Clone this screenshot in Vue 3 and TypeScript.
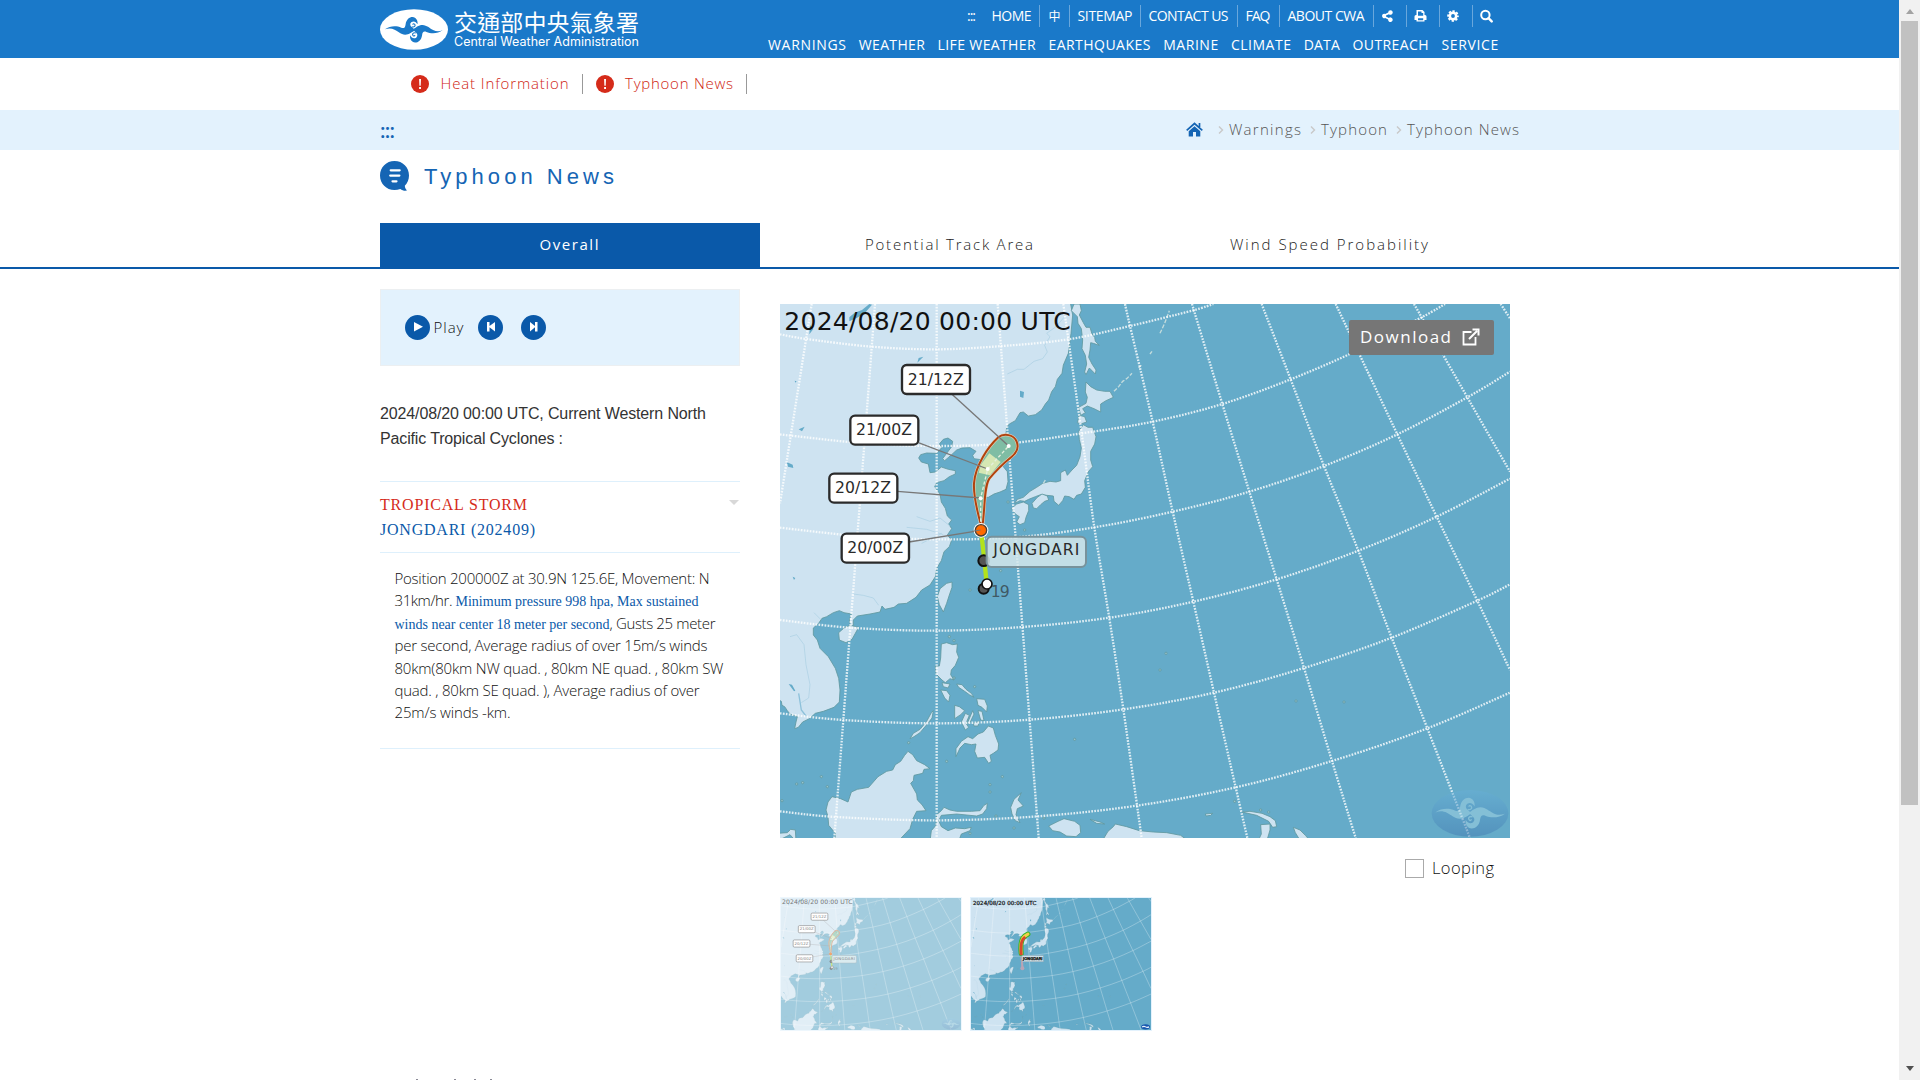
<script setup lang="ts">
import type { Directive } from 'vue'

type Pt = [number, number]

// Tracks a label out (or in) so that its glyphs span the given width in px.
const vFit: Directive<HTMLElement, number> = {
  mounted(el, { value }) {
    const count = (el.textContent ?? '').length
    if (count < 2) return
    el.style.letterSpacing = '0px'
    const spacing = (value - el.getBoundingClientRect().width) / (count - 1)
    el.style.letterSpacing = `${spacing}px`
    el.style.marginRight = `${-spacing}px`
  },
}

const utility = [
  { label: 'HOME', box: 56, fit: 40 },
  { label: '中', box: 30, fit: 12 },
  { label: 'SITEMAP', box: 71, fit: 55 },
  { label: 'CONTACT US', box: 97, fit: 80 },
  { label: 'FAQ', box: 42, fit: 25 },
  { label: 'ABOUT CWA', box: 94, fit: 77 },
]

const tools = [
  'M9.5 1.2a2.3 2.3 0 1 1-1.6 4L5 6.5v1l2.9 1.4a2.3 2.3 0 1 1-.8 1.6L4.300 9.100a2.300 2.300 0 1 1 0-4.200l2.900-1.300A2.300 2.300 0 0 1 9.500 1.200z',
  'M2.500 1h6l2 2v3h.5a1.500 1.500 0 0 1 1.500 1.500v3.500h-2v1.500h-8V11h-2V7.500A1.500 1.500 0 0 1 2 6h.500zM4 2.500V6.800h5.200V4H7.500V2.500zM4 9.300v1.900h5.200V9.300z',
]

const menu = [
  { label: 'WARNINGS', fit: 78 },
  { label: 'WEATHER', fit: 66 },
  { label: 'LIFE WEATHER', fit: 98 },
  { label: 'EARTHQUAKES', fit: 102 },
  { label: 'MARINE', fit: 55 },
  { label: 'CLIMATE', fit: 60 },
  { label: 'DATA', fit: 36 },
  { label: 'OUTREACH', fit: 76 },
  { label: 'SERVICE', fit: 57 },
]

const alerts = [
  { label: 'Heat Information', fit: 128 },
  { label: 'Typhoon News', fit: 108 },
]

const crumbs = [
  { label: 'Warnings', fit: 72 },
  { label: 'Typhoon', fit: 66 },
  { label: 'Typhoon News', fit: 112 },
]

const tabs = [
  { label: 'Overall', fit: 59 },
  { label: 'Potential Track Area', fit: 168 },
  { label: 'Wind Speed Probability', fit: 198 },
]

// Catmull-Rom spline through the graticule crossings.
function spline(p: Pt[]): string {
  let d = `M${p[0][0]} ${p[0][1]}`
  for (let i = 0; i < p.length - 1; i++) {
    const a = p[Math.max(i - 1, 0)]
    const b = p[i]
    const c = p[i + 1]
    const e = p[Math.min(i + 2, p.length - 1)]
    d += `C${b[0] + (c[0] - a[0]) / 6} ${b[1] + (c[1] - a[1]) / 6} ${c[0] - (e[0] - b[0]) / 6} ${c[1] - (e[1] - b[1]) / 6} ${c[0]} ${c[1]}`
  }
  return d
}

const graticule = ([
  [[125, 42], [30, 640]],
  [[315, 42], [193, 1644]],
  [[500, 42], [500, 1644]],
  [[683, 42], [806, 1644]],
  [[880, 42], [935, 430], [973, 712], [1018, 985], [1060, 1258], [1115, 1644]],
  [[1065, 42], [1080, 108], [1148, 395], [1208, 665], [1270, 935], [1332, 1208], [1397, 1492], [1432, 1644]],
  [[1266, 42], [1357, 342], [1438, 605], [1520, 868], [1602, 1134], [1686, 1413], [1757, 1644]],
  [[1475, 42], [1562, 268], [1662, 528], [1765, 782], [1865, 1043], [1972, 1315], [2100, 1644]],
  [[1697, 42], [1882, 433], [2000, 680], [2122, 932], [2220, 1140]],
  [[1932, 42], [1955, 82], [2092, 322], [2220, 545]],
  [[2192, 42], [2220, 85]],
  [[30, 133], [110, 147], [305, 170], [500, 178], [697, 168], [895, 148], [1080, 108], [1266, 62], [1330, 42]],
  [[30, 433], [63, 437], [285, 460], [500, 468], [718, 460], [935, 430], [1148, 395], [1357, 342], [1562, 268], [1765, 180], [1955, 82], [2025, 42]],
  [[30, 713], [265, 738], [500, 748], [735, 742], [973, 712], [1208, 665], [1438, 605], [1662, 528], [1882, 433], [2092, 322], [2220, 245]],
  [[30, 990], [240, 1013], [500, 1022], [757, 1011], [1018, 983], [1270, 935], [1520, 868], [1765, 782], [2000, 680], [2220, 566]],
  [[30, 1270], [220, 1290], [500, 1300], [779, 1289], [1060, 1258], [1332, 1208], [1602, 1134], [1865, 1043], [2122, 932], [2220, 883]],
  [[30, 1564], [200, 1581], [500, 1591], [803, 1579], [1100, 1547], [1397, 1492], [1686, 1413], [1972, 1315], [2220, 1208]],
] as Pt[][]).map(spline)

const land = [
  // Asian mainland and Korea
  '20,32 900,32 908,75 903,130 895,190 880,225 876,250 862,268 856,290 845,305 836,330 826,342 815,360 796,374 775,378 760,366 750,368 736,392 718,402 710,412 708,430 714,450 700,480 690,505 700,530 712,545 714,575 708,598 690,606 672,612 655,622 644,622 636,614 640,590 634,575 645,556 620,545 630,530 640,510 612,506 608,496 618,484 600,473 576,474 560,480 545,494 524,512 518,506 530,490 545,470 548,454 534,444 520,448 508,462 516,472 500,490 470,489 452,494 446,504 454,516 475,522 480,548 496,546 514,531 535,538 556,542 556,552 538,560 522,572 500,578 494,590 510,612 514,636 526,655 532,678 545,690 536,702 545,716 532,735 545,750 538,770 522,785 514,812 500,835 496,860 480,885 455,900 438,922 410,940 385,942 372,952 345,958 336,948 330,966 300,972 262,978 250,990 250,1006 242,1010 238,990 244,972 222,968 208,962 190,968 170,980 156,985 146,1000 130,1014 130,1035 142,1050 150,1075 175,1100 196,1135 206,1165 210,1200 208,1236 192,1252 160,1264 136,1270 118,1286 98,1296 85,1312 74,1316 78,1296 82,1280 60,1272 52,1262 44,1250 36,1246 34,1234 20,1226',
  // Sakhalin
  '912,42 930,42 934,62 928,75 940,98 948,112 960,112 966,132 974,142 976,154 988,166 970,160 962,158 960,180 956,202 966,222 978,240 976,252 958,234 948,254 944,246 950,222 946,196 936,176 938,150 934,116 924,100 922,80 904,62',
  // Hokkaido
  '948,276 962,290 980,300 1004,304 1020,304 1030,322 1008,332 992,342 992,366 972,356 952,348 938,356 946,368 932,376 926,352 948,340 952,322 946,306',
  '928,376 944,380 950,396 932,402 922,398',
  // Honshu, Shikoku, Kyushu
  '940,404 954,412 968,412 978,440 974,462 962,484 962,510 968,530 955,545 944,572 946,592 934,612 920,616 912,628 898,620 884,618 878,632 866,646 852,634 850,618 830,616 812,614 796,620 776,628 764,634 750,632 734,640 742,628 760,622 780,604 800,592 818,580 840,574 858,576 872,572 872,548 886,540 892,556 906,540 920,526 930,500 934,474 928,448 926,424',
  '786,640 802,622 816,612 832,618 836,630 824,634 812,644 800,656 790,654',
  '724,656 740,642 760,636 776,644 776,662 768,682 764,698 750,704 740,696 748,680 736,672',
  // Taiwan, Hainan
  '530,880 546,876 546,892 538,915 530,940 520,966 508,944 502,920 510,896',
  '206,1028 222,1014 240,1006 266,1012 256,1030 246,1048 228,1058 208,1050',
  // Philippines
  '514,1062 530,1058 548,1064 562,1062 560,1086 566,1102 556,1126 544,1140 542,1154 552,1170 540,1166 526,1178 516,1170 498,1152 496,1128 508,1128 512,1104',
  '516,1178 540,1182 534,1194 520,1190',
  '512,1200 530,1202 540,1216 536,1236 524,1224',
  '560,1182 576,1184 588,1198 604,1210 612,1222 598,1214 584,1204 566,1192',
  '620,1226 644,1228 652,1248 650,1266 636,1252 624,1246',
  '554,1246 568,1250 584,1262 572,1274 554,1286',
  '586,1270 598,1276 588,1300 596,1312 586,1320 574,1296',
  '608,1262 612,1272 598,1302 592,1300',
  '624,1262 636,1264 642,1292 632,1290',
  '610,1300 628,1294 624,1308 612,1308',
  '655,1308 670,1314 676,1336 686,1362 684,1380 670,1390 660,1396 664,1414 656,1420 644,1402 622,1404 614,1384 618,1362 604,1364 584,1360 570,1374 558,1400 558,1376 574,1354 594,1340 608,1346 624,1332 640,1326',
  '420,1346 430,1330 450,1318 470,1294 484,1268 490,1262 486,1284 472,1302 450,1328 432,1340',
  // Borneo, Sulawesi, Moluccas
  '414,1384 428,1394 440,1412 464,1424 480,1436 462,1438 458,1450 432,1456 430,1472 422,1480 440,1512 442,1530 456,1544 468,1562 440,1564 428,1588 420,1616 384,1654 196,1654 196,1630 176,1606 174,1580 168,1560 174,1536 186,1520 212,1526 234,1536 244,1506 262,1498 296,1492 324,1460 350,1444 368,1440 376,1424 392,1414 404,1396',
  '500,1574 514,1562 522,1552 540,1560 560,1564 604,1564 630,1562 642,1546 652,1540 650,1556 638,1572 620,1578 560,1572 514,1576 506,1592 514,1610 534,1622 556,1614 584,1616 604,1612 600,1622 574,1632 566,1654 480,1654 484,1622 498,1606',
  '754,1508 744,1530 760,1548 742,1556 738,1574 750,1598 736,1592 726,1572 722,1552 732,1528',
  // New Guinea and neighbours
  '836,1608 864,1594 882,1586 914,1594 930,1606 932,1628 918,1640 890,1638 870,1626 848,1622',
  '996,1654 1014,1624 1030,1610 1036,1602 1070,1610 1108,1622 1150,1626 1190,1628 1232,1636 1256,1654',
  '960,1588 990,1596 1004,1602 980,1600',
  '1416,1566 1440,1564 1476,1570 1500,1580 1516,1592 1520,1610 1508,1612 1496,1594 1460,1576',
  '1472,1604 1500,1602 1500,1620 1490,1654 1464,1654 1474,1632',
  '1570,1612 1590,1620 1606,1636 1622,1654 1592,1654 1576,1628',
  '20,1630 52,1628 62,1618 76,1620 78,1654 60,1634 20,1654',
  '1306,1572 1328,1570 1322,1576 1308,1578',
]

const islets: Pt[] = [
  [154, 1460], [98, 1478], [80, 1482], [172, 1490], [36, 1532], [697, 1460], [660, 1484], [660, 1506],
  [530, 1414], [914, 1348], [1188, 1090], [1170, 1140], [1578, 1233], [1722, 1236], [692, 842], [600, 900],
  [642, 652], [714, 636], [764, 720], [742, 790], [538, 1040], [552, 1052], [552, 1164], [614, 1190],
  [732, 1614], [678, 1578], [822, 1584], [1472, 1560], [1496, 1566], [416, 1358], [600, 1630], [1394, 1534],
]

const steps = [
  { label: '21/12Z', x: 396, y: 225, w: 204, line: '545,312 716,468' },
  { label: '21/00Z', x: 241, y: 377, w: 204, line: '445,458 653,537' },
  { label: '20/12Z', x: 178, y: 551, w: 204, line: '382,604 633,624' },
  { label: '20/00Z', x: 215, y: 731, w: 202, line: '417,756 632,721' },
]

const cone = 'M633 705C626 680 610 620 612 580C616 525 655 470 685 442C702 428 732 434 740 455C748 475 740 488 725 500C700 520 675 545 658 566C642 590 646 640 638 704Z'
</script>

<template>
  <div class="screen">
    <div class="page">
      <header class="top">
        <a class="brand">
          <svg class="brand-mark" viewBox="30 26 205 123">
            <ellipse cx="132.500" cy="87.500" rx="102.500" ry="61" fill="#fff" />
            <g fill="#1a79c9">
              <g id="wave">
                <path d="M45 87C60 76 80 76 94 82C103 86 106 80 107 73C109 57 119 50 128 50C139 51 145 61 143 72C139 64 132 61 125 65C119 70 121 77 127 81C131 86 134 88 138 88C126 95 118 103 106 103C92 102 86 94 74 88C64 83 56 83 45 87Z" />
                <path d="M126 79C133 82 139 76 134 71C132 69 129 70 129 73" fill="none" stroke="currentColor" stroke-width="3.200" />
              </g>
              <use href="#wave" transform="rotate(180 132 88.500)" />
            </g>
          </svg>
          <span class="brand-text">
            <span class="brand-zh"><span v-fit="185">交通部中央氣象署</span></span>
            <span class="brand-en"><span v-fit="185">Central Weather Administration</span></span>
          </span>
        </a>
        <div class="navs">
          <ul class="utility">
            <li class="skip"><span v-fit="9">:::</span></li>
            <li v-for="u in utility" :key="u.label" :style="{ width: u.box + 'px' }">
              <span v-fit="u.fit" :class="{ zh: u.label === '中' }">{{ u.label }}</span>
            </li>
            <li v-for="t in tools" :key="t" class="tool">
              <svg viewBox="0 0 13 14"><path :d="t" fill="#fff" fill-rule="evenodd" /></svg>
            </li>
            <li class="tool">
              <svg viewBox="0 0 13 14">
                <circle cx="6" cy="7" r="3.200" fill="none" stroke="#fff" stroke-width="2.600" />
                <circle cx="6" cy="7" r="4.900" fill="none" stroke="#fff" stroke-width="1.800" stroke-dasharray="2.300 1.548" stroke-dashoffset="1.150" />
              </svg>
            </li>
            <li class="tool">
              <svg viewBox="0 0 13 14"><circle cx="5.400" cy="6" r="4.200" fill="none" stroke="#fff" stroke-width="2" /><path d="M8.500 9.200l3.200 3.200" stroke="#fff" stroke-width="2.400" stroke-linecap="round" /></svg>
            </li>
          </ul>
          <ul class="menu">
            <li v-for="m in menu" :key="m.label"><span v-fit="m.fit">{{ m.label }}</span></li>
          </ul>
        </div>
      </header>

      <div class="alerts">
        <a v-for="a in alerts" :key="a.label">
          <svg viewBox="0 0 18 18"><circle cx="9" cy="9" r="9" fill="#d52b1a" /><path d="M8.100 4h1.900l-.3 6.800H8.400zM8.100 12h1.900v1.900H8.100z" fill="#fff" /></svg>
          <span v-fit="a.fit">{{ a.label }}</span>
        </a>
      </div>

      <nav class="crumbs">
        <span class="access"><span v-fit="15">:::</span></span>
        <div class="path">
          <svg class="home" viewBox="0 0 17 15"><path d="M8.500 4.300l5.800 5v5.200H10V10H7v4.500H2.700V9.300z" fill="#1565b4" /><path d="M.7 8.300L8.500 1.500l7.800 6.800M13.500 1v4" fill="none" stroke="#1565b4" stroke-width="1.700" /></svg>
          <template v-for="c in crumbs" :key="c.label">
            <svg class="chev" viewBox="0 0 6 10"><path d="M1 1.500L4.500 5 1 8.500" fill="none" stroke="#c8c8c8" stroke-width="1.400" /></svg>
            <span v-fit="c.fit">{{ c.label }}</span>
          </template>
        </div>
      </nav>

      <h1 class="title">
        <svg viewBox="0 0 30 31"><path d="M14.500 0C22.800 0 29 6.300 29 14.400c0 4.300-1.700 7.800-4.200 10.400.2 2.300.9 3.600 2.300 4.700-2.500.5-5-.2-6.800-1.600-1.800.7-3.700 1.100-5.800 1.100C6.300 29 0 22.700 0 14.500S6.300 0 14.500 0z" fill="#1565b4" /><path d="M10.700 9.300h9M10.200 14.600h9.200M12.500 20.300h4" stroke="#fff" stroke-width="2.200" stroke-linecap="round" /></svg>
        <span v-fit="190">Typhoon News</span>
      </h1>

      <div class="tabs">
        <a v-for="(t, i) in tabs" :key="t.label" :class="{ on: i === 0 }"><span v-fit="t.fit">{{ t.label }}</span></a>
      </div>

      <main class="content">
        <aside class="side">
          <div class="player">
            <button type="button"><svg viewBox="0 0 25 25"><path d="M9 7l9 4.700L9 16.500z" fill="#fff" /></svg></button>
            <span v-fit="30" class="play">Play</span>
            <button type="button" class="prev"><svg viewBox="0 0 25 25"><path d="M9 7h2.500v4L17 7v9.500l-5.500-4.200v4.200H9z" fill="#fff" /></svg></button>
            <button type="button" class="next"><svg viewBox="0 0 25 25"><path d="M16.500 7H14v4L9 7v9.500l5-4.200v4.200h2.500z" fill="#fff" /></svg></button>
          </div>
          <p class="summary">
            <span class="line"><span v-fit="326">2024/08/20 00:00 UTC, Current Western North</span></span>
            <span class="line"><span v-fit="183">Pacific Tropical Cyclones :</span></span>
          </p>
          <section class="storm">
            <div class="storm-name">
              <i class="caret"></i>
              <span class="line red"><span v-fit="147">TROPICAL STORM</span></span>
              <span class="line"><span v-fit="155">JONGDARI (202409)</span></span>
            </div>
            <div class="storm-body">
              <span class="row"><span v-fit="315">Position 200000Z at 30.9N 125.6E, Movement: N</span></span>
              <span class="row"><span v-fit="58">31km/hr.</span><b v-fit="243" class="gap">Minimum pressure 998 hpa, Max sustained</b></span>
              <span class="row"><b v-fit="215">winds near center 18 meter per second</b><span v-fit="106">, Gusts 25 meter</span></span>
              <span class="row"><span v-fit="313">per second, Average radius of over 15m/s winds</span></span>
              <span class="row"><span v-fit="329">80km(80km NW quad. , 80km NE quad. , 80km SW</span></span>
              <span class="row"><span v-fit="305">quad. , 80km SE quad. ), Average radius of over</span></span>
              <span class="row"><span v-fit="116">25m/s winds -km.</span></span>
            </div>
          </section>
        </aside>

        <section class="chart">
          <div class="stage">
            <svg class="map" viewBox="30 42 2190 1602" preserveAspectRatio="none">
              <defs>
                <symbol id="base" viewBox="30 42 2190 1602" preserveAspectRatio="none">
                  <rect x="30" y="42" width="2190" height="1602" fill="#65abc9" />
                  <g fill="#cee3f1" stroke="#5f989f" stroke-width="2.500" stroke-linejoin="round">
                    <polygon v-for="l in land" :key="l" :points="l" />
                    <circle v-for="(p, i) in islets" :key="i" :cx="p[0]" :cy="p[1]" r="3.500" fill="#9cc6cf" />
                  </g>
                  <g fill="none" stroke="#c3dcdd" stroke-width="4">
                    <path d="M1032 304l14-14 12-16 12-8 16-16M1106 234l8-8M1140 192l6-8M1170 130l14-30 14-38M820 580l6-10" stroke-dasharray="12 5" />
                  </g>
                  <g fill="none" stroke="#a9cfe2" stroke-width="2">
                    <path d="M712 252l30-14 20 0 30-24 26-8 14-20-8-20 16-26-10-10 28-20 24-28M60 1040l20-6 22 30 6 60 12 60-4 40-22 14M250 912l30 4 30 8 16 22M132 968l20 20M440 680l40 14 30-10 30 24M410 712l60 6 50 16M455 760l60-30" />
                  </g>
                  <g fill="#65abc9">
                    <path d="M750 302l12 4-2 18-10-4zM446 204l14-4-18 18zM238 82l16-14 22-8 22-18 8 2-22 26-24 14-22 10zM120 105l10 12-12 16zM50 516l18 8 2 10-16-4zM56 1182l10 2 10 18-4 2zM86 418l18-8-8 14zM74 272l6 2-4 4zM68 860l8 4-4 6z" />
                    <path d="M86 1210l8 50 14 18" fill="none" stroke="#8dc1da" stroke-width="4" />
                  </g>
                </symbol>
                <g id="grid" fill="none"><path v-for="g in graticule" :key="g" :d="g" /></g>
              </defs>
              <use href="#base" x="30" y="42" width="2190" height="1602" />
              <use href="#grid" class="dots" />
              <g id="forecast">
                <path :d="cone" fill="#7fbda4" stroke="#e9d5bd" stroke-width="9" />
                <path d="M658 490L692 516L660 556L626 548L634 522Z" fill="#d5e7b4" />
                <path :d="cone" fill="none" stroke="#b0430f" stroke-width="6" />
                <path d="M632 695L632 624L653 537L716 468" fill="none" stroke="#e4f0dc" stroke-width="4" stroke-dasharray="10 6" />
                <path d="M633 722L642 800L650 880" fill="none" stroke="#b3e21c" stroke-width="13" />
                <polyline v-for="s in steps" :key="s.line" :points="s.line" fill="none" stroke="#777" stroke-width="4" />
                <circle cx="716" cy="468" r="6" fill="#fff" /><circle cx="653" cy="537" r="6" fill="#fff" /><circle cx="632" cy="625" r="6" fill="#fff" />
                <circle cx="633" cy="721" r="22" fill="#fff" /><circle cx="633" cy="721" r="17" fill="#ff6a00" stroke="#4d4034" stroke-width="4" />
                <path d="M606 724L632 720" stroke="#777" stroke-width="3" />
                <circle cx="641" cy="812" r="16" fill="#555" stroke="#111" stroke-width="6" />
                <circle cx="641" cy="896" r="15" fill="#555" stroke="#111" stroke-width="6" />
                <circle cx="651" cy="882" r="15" fill="#fff" stroke="#111" stroke-width="5" />
                <rect x="650" y="740" width="298" height="91" rx="15" fill="#d3e7ea" fill-opacity=".86" stroke="#78929b" stroke-width="6" />
                <text x="670" y="796" textLength="258" class="lbl">JONGDARI</text>
                <text x="662" y="920" textLength="57" class="lbl" fill-opacity=".65">19</text>
                <g v-for="s in steps" :key="s.label">
                  <rect :x="s.x" :y="s.y" :width="s.w" height="87" rx="14" fill="#fff" stroke="#2b2b2b" stroke-width="7" />
                  <text :x="s.x + 17" :y="s.y + 59" textLength="168" class="lbl">{{ s.label }}</text>
                </g>
                <text x="43" y="119" textLength="859" class="stamp">2024/08/20 00:00 UTC</text>
              </g>
              <g id="seal" opacity=".55">
                <ellipse cx="2100" cy="1570" rx="115" ry="70" fill="url(#sea)" />
                <linearGradient id="sea" x1="0" y1="0" x2="0" y2="1"><stop offset="0" stop-color="#68b0d6" /><stop offset="1" stop-color="#4680b4" /></linearGradient>
                <g class="seal-wave" fill="#9fd0e2" transform="translate(1942 1463) scale(1.2)">
                  <use href="#wave" /><use href="#wave" transform="rotate(180 132 88.500)" />
                </g>
              </g>
            </svg>
            <a class="download">
              <span v-fit="91">Download</span>
              <svg viewBox="0 0 18 18"><path d="M9.500 4H1.500v12.500h12V9" fill="none" stroke="#fff" stroke-width="1.800" /><path d="M7 11l8-8M10.500 1.500h6v6" fill="none" stroke="#fff" stroke-width="2" /></svg>
            </a>
          </div>
          <label class="loop"><i class="box"></i><span v-fit="62">Looping</span></label>
          <div class="thumbs">
            <svg class="thumb dim" viewBox="30 42 2190 1602" preserveAspectRatio="none">
              <use href="#base" x="30" y="42" width="2190" height="1602" />
              <use href="#grid" class="faint" />
              <use href="#forecast" />
              <use href="#seal" />
            </svg>
            <svg class="thumb" viewBox="30 42 2190 1602" preserveAspectRatio="none">
              <use href="#base" x="30" y="42" width="2190" height="1602" />
              <use href="#grid" class="faint" />
              <path d="M645 730L655 890" stroke="#b9a4b6" stroke-width="26" />
              <circle cx="655" cy="895" r="24" fill="#b9a4b6" />
              <path d="M641 715C632 640 632 580 660 530Q680 500 722 480" fill="none" stroke="#35b52b" stroke-width="62" stroke-linecap="round" />
              <path d="M641 715C632 640 632 580 660 530Q680 500 722 480" fill="none" stroke="#f0d04a" stroke-width="38" stroke-linecap="round" />
              <path d="M641 735C632 640 634 590 660 545L690 515" fill="none" stroke="#d8482c" stroke-width="34" />
              <rect x="650" y="742" width="260" height="74" fill="#cfe0e8" stroke="#94a8b2" stroke-width="6" />
              <text x="664" y="797" textLength="236" class="lbl bold">JONGDARI</text>
              <text x="54" y="132" textLength="770" class="stamp bold">2024/08/20 00:00 UTC</text>
              <ellipse cx="2154" cy="1606" rx="54" ry="32" fill="#1757ae" /><path d="M2112 1606Q2135 1594 2154 1606T2196 1606" fill="none" stroke="#e9f3ff" stroke-width="14" />
            </svg>
          </div>
        </section>
      </main>
      <footer class="peek"><i></i><i></i><i></i><i></i></footer>
    </div>
    <div class="scroll"><i class="up"></i><i class="thumbbar"></i><i class="down"></i></div>
  </div>
</template>

<style>
body { background: #fff; overflow: hidden; }
</style>

<style scoped>
* { box-sizing: border-box; }
.screen { display: flex; width: 1920px; height: 1080px; overflow: hidden; font-family: "Open Sans", "Noto Sans", "Noto Sans CJK TC", sans-serif; font-size: 15px; color: #333; }
.page { width: 1899px; height: 1080px; flex: none; display: flex; flex-direction: column; }
ul, h1, p { margin: 0; padding: 0; list-style: none; font-weight: 400; }
span[style], b, .line > span, .row > span { display: inline-block; white-space: pre; }
span { white-space: pre; }

.top { display: flex; height: 58px; flex: none; background: #1a79c9; padding-left: 380px; color: #fff; }
.brand { display: flex; width: 387px; padding-top: 9px; }
.brand-mark { width: 68px; height: 41px; flex: none; color: #1a79c9; }
.brand-text { display: flex; flex-direction: column; margin-left: 6px; }
.brand-zh { font: 400 23px/24px "Noto Sans CJK TC", sans-serif; height: 25px; }
.brand-en { font: 400 12.5px/14px Inter, "Open Sans", sans-serif; height: 14px; margin-top: 1px; }
.navs { display: flex; flex-direction: column; font-size: 14px; }
.utility { display: flex; height: 22px; margin: 5px 0 0 200px; line-height: 22px; }
.utility li { padding-left: 7.5px; border-right: 1px solid #69a7dc; flex: none; }
.utility .skip { width: 17px; padding: 0; border: 0; }
.utility .zh { font-size: 12px; margin-left: 1px; }
.tool { width: 33px; display: flex; align-items: center; }
.utility .tool { padding-left: 7px; }
.utility .tool:last-child { border: 0; }
.tool svg { width: 13px; height: 14px; }
.menu { display: flex; gap: 12.8px; line-height: 35px; margin-left: 1px; }

.alerts { display: flex; height: 52px; flex: none; padding-left: 411px; align-items: center; color: #cf1d10; font-weight: 350; }
.alerts a { display: flex; align-items: center; height: 20px; border-right: 1px solid #999; padding-right: 13px; line-height: 18px; margin-right: 13px; }
.alerts span { padding-bottom: 2px; }
.alerts svg { width: 18px; height: 18px; margin-right: 11.5px; }

.crumbs { display: flex; height: 40px; flex: none; background: #e3f2fd; padding: 0 380px; justify-content: space-between; color: #555; font-weight: 350; }
.access { font: 600 20px/41px "Open Sans", sans-serif; color: #1565b4; }
.path { display: flex; align-items: center; line-height: 38px; padding-bottom: 2px; }
.home { width: 17px; height: 15px; margin: 0 6px 0 0; }
.chev { width: 6px; height: 10px; margin: 2px 5px 0 9px; }

.title { display: flex; align-items: center; height: 53px; flex: none; margin: 0 0 20px 380px; font: 400 22px/53px "Liberation Sans", Arial, sans-serif; color: #1565b4; }
.title svg { width: 30px; height: 31px; margin-right: 14px; }

.tabs { display: flex; flex: none; height: 46px; padding-left: 380px; border-bottom: 2px solid #0a59a9; line-height: 43px; color: #222; font-weight: 350; }
.tabs a { width: 380px; padding-right: 2px; text-align: center; }
.tabs .on { background: #0a59a9; color: #fff; font-weight: 400; }

.content { display: flex; padding-left: 380px; flex: none; height: 810px; }
.side { width: 360px; padding-top: 20px; margin-right: 40px; }
.player { display: flex; align-items: center; height: 77px; border: 1px solid #eceff1; background: #e3f2fd; padding-left: 24px; }
.player button { width: 25px; height: 25px; padding: 0; border: 0; border-radius: 50%; background: #0a59a9; }
.player svg { display: block; width: 25px; height: 25px; }
.play { margin-left: 3.5px; padding-bottom: 1px; font-weight: 350; color: #111; }
.player .prev { margin-left: 14.5px; }
.player .next { margin-left: 18px; }
.summary { padding: 35px 0 30px; font: 16px/25px "Liberation Sans", Arial, sans-serif; }
.line, .row { display: block; white-space: nowrap; }
.storm-name { position: relative; height: 71px; padding-top: 10px; border-top: 1px solid #def0fc; font: 16px/25px "Liberation Serif", "Times New Roman", serif; color: #0a59a9; }
.red { color: #d52b1a; }
.caret { position: absolute; right: 1px; top: 18px; border: 5px solid transparent; border-top-color: #d8d8d8; border-bottom: 0; }
.storm-body { height: 197px; padding: 14px 0 0 14.5px; border: solid #def0fc; border-width: 1px 0; font-weight: 350; color: #111; }
.row { height: 22.4px; line-height: 22.4px; }
.row b { font: 400 14px/22px "Liberation Serif", "Times New Roman", serif; color: #0a59a9; }
.row .gap { margin-left: 3px; }

.chart { width: 730px; padding-top: 35px; }
.stage { position: relative; height: 534px; }
.map { display: block; width: 730px; height: 534px; }
.dots { stroke: #fff; stroke-opacity: .8; stroke-width: 7; stroke-dasharray: 5 4; }
.faint { stroke: #fff; stroke-opacity: .38; stroke-width: 9; }
.lbl { font: 47px "DejaVu Sans", sans-serif; fill: #2a2a2a; }
.stamp { font: 75px "DejaVu Sans", sans-serif; fill: #111; }
.stamp.bold { font-size: 67px; stroke: #111; stroke-width: 3; }
.lbl.bold { stroke: #222; stroke-width: 5; }
.seal-wave { color: #9fd0e2; }
.download { position: absolute; left: 569px; top: 16px; width: 145px; height: 35px; border-radius: 2px; background: #767676; color: #fff; display: flex; align-items: center; padding-left: 11px; font-size: 17px; line-height: 32px; }
.download span { padding-bottom: 2px; }
.download svg { width: 18px; height: 18px; position: absolute; left: 113px; top: 8px; }
.loop { display: flex; align-items: center; height: 60px; padding-left: 625px; font-size: 16.5px; font-weight: 350; color: #111; }
.box { width: 19px; height: 19px; border: 1px solid #aaa; margin-right: 8px; }
.loop span { padding-bottom: 2px; }
.thumbs { display: flex; gap: 8px; margin-top: -1px; }
.thumb { width: 182px; height: 134px; border: 1px solid #e3f2fd; display: block; }
.dim { opacity: .6; }

.peek { display: flex; height: 1px; padding-left: 416px; gap: 36px; flex: none; }
.peek i { width: 2px; height: 1px; background: #8a8a96; }
.peek i:nth-child(3) { margin-left: -18px; }
.peek i:nth-child(4) { margin-left: -22px; }

.scroll { width: 21px; background: #f1f1f1; display: flex; flex-direction: column; align-items: center; }
.up { margin-top: 9px; border: 4.500px solid transparent; border-bottom: 5px solid #a3a3a3; border-top: 0; }
.thumbbar { width: 17px; height: 784px; margin-top: 7px; background: #c1c1c1; }
.down { margin-top: 261px; border: 4.500px solid transparent; border-top: 5px solid #505050; border-bottom: 0; }
</style>
